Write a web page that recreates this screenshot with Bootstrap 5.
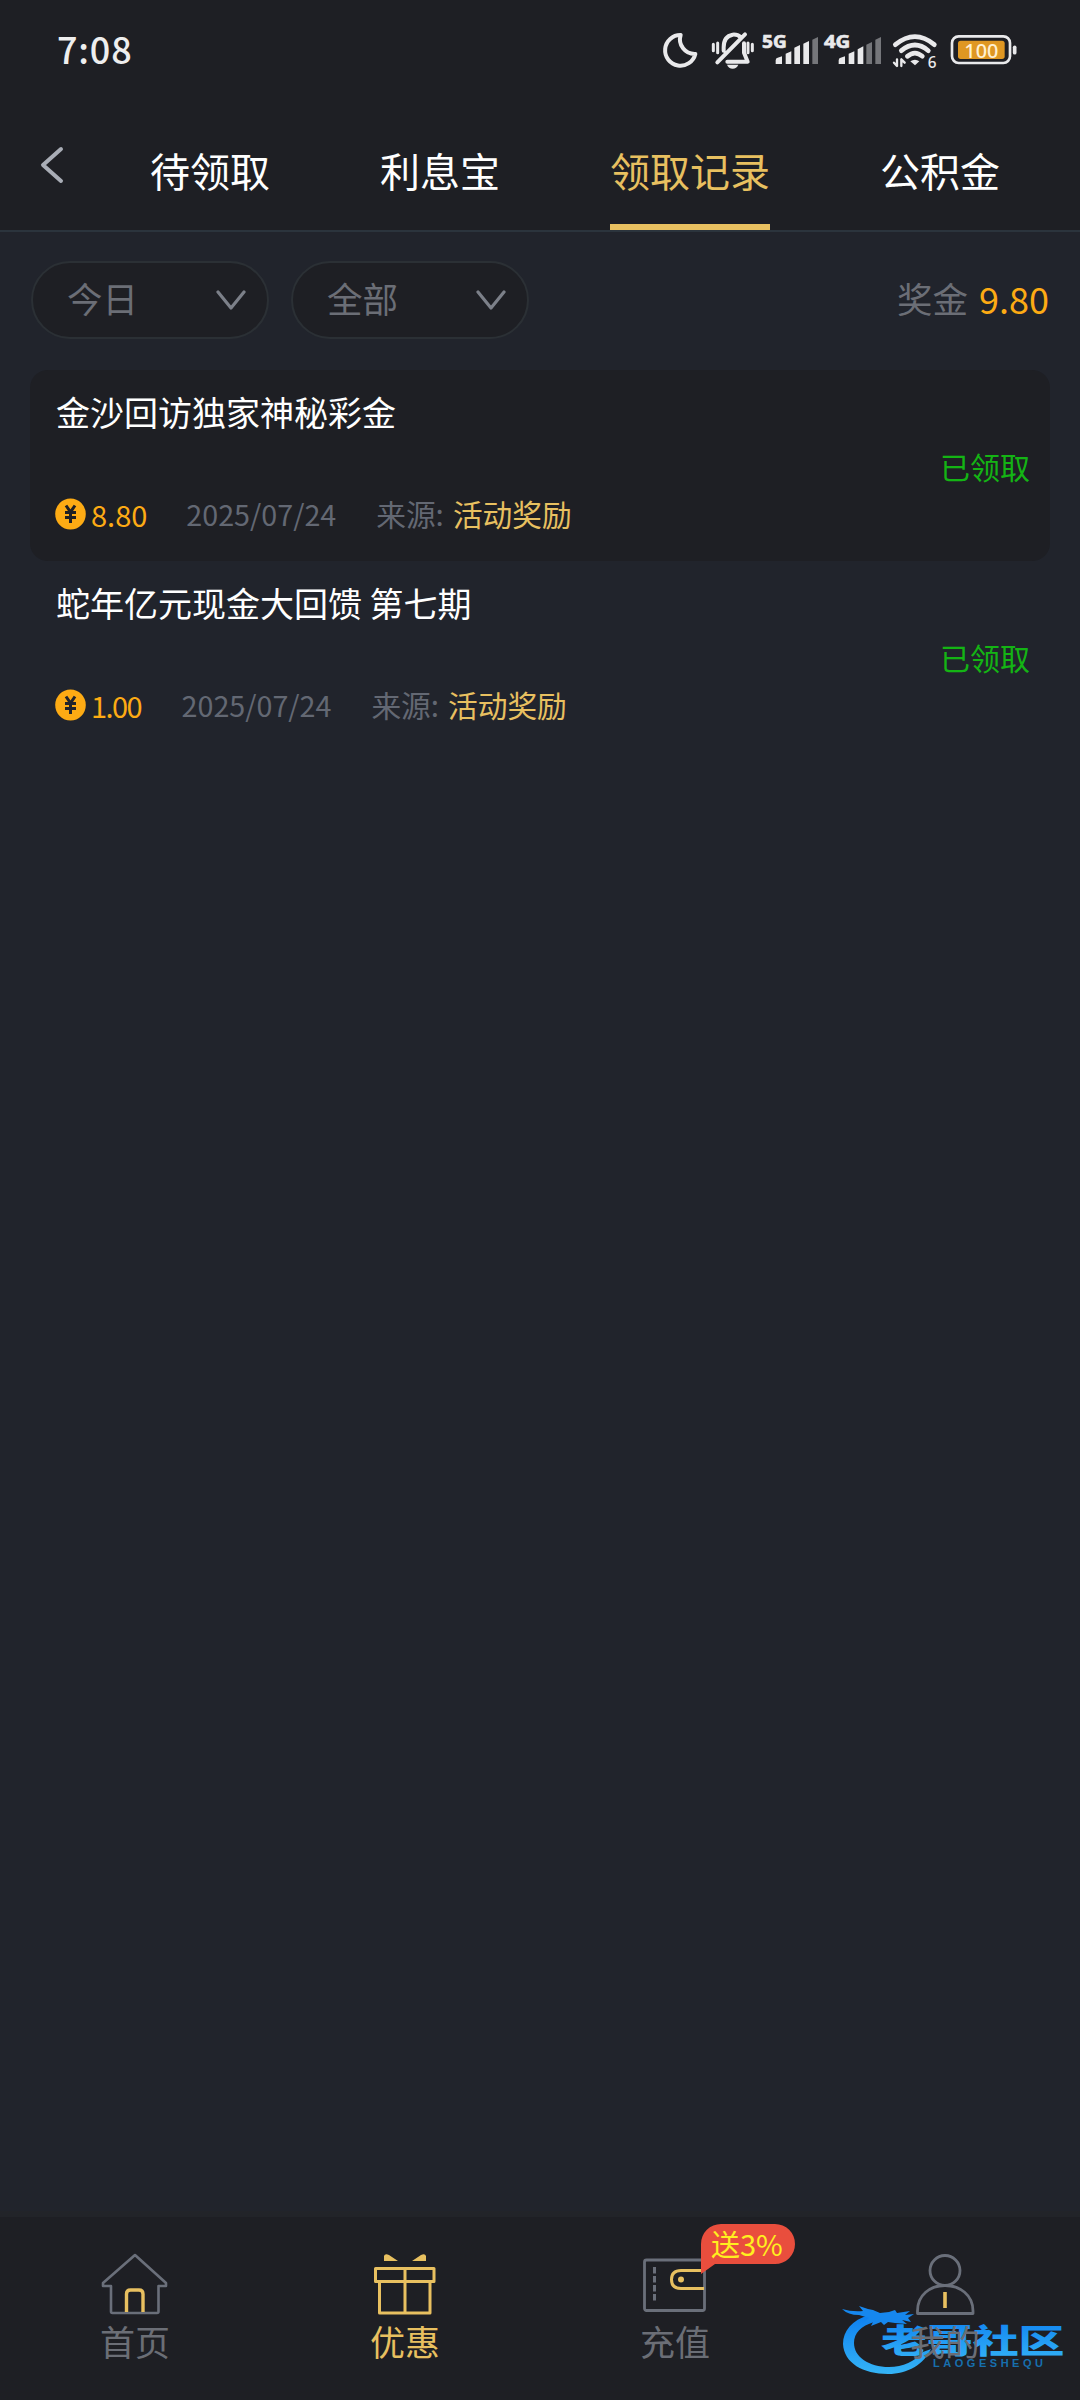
<!DOCTYPE html>
<html lang="zh-CN">
<head>
<meta charset="utf-8">
<meta name="viewport" content="width=device-width, initial-scale=1">
<title>领取记录</title>
<link href="https://cdn.jsdelivr.net/npm/bootstrap@5.3.0/dist/css/bootstrap.min.css" rel="stylesheet">
<style>
  :root { --ink: #1e1f24; --page: #21242c; --gold: #e8c060; --amber: #fdab14; --muted: #6b6e76; }
  body { background: var(--page); color: #fff; font-family: "Noto Sans CJK SC", sans-serif; min-height: 2400px; }
  .topbar { background: var(--ink); height: 232px; border-bottom: 2px solid #2b343d; }
  .statusbar { height: 100px; padding-left: 57px; }
  .clock { font-size: 36px; font-weight: 500; color: #eee; line-height: 97px; letter-spacing: .8px; }
  .status-icons { width: 440px; height: 100px; }
  .tabs { height: 130px; padding-left: 40px; }
  .back { width: 110px; height: 100%; color: #a9adb6; }
  .tab-list { gap: 110px; }
  .tab-item { font-size: 40px; line-height: 60px; padding: 40px 0 24px; border-bottom: 6px solid transparent; color: #fff; text-decoration: none; white-space: nowrap; }
  .tab-item.active { color: var(--gold); border-color: var(--gold); }
  .filters { padding: 29px 31px 0; gap: 22px; }
  .pill { width: 238px; height: 78px; background: var(--ink); border: 2px solid #2b3035; padding: 0 21px 0 34px; color: var(--muted); font-size: 35.5px; line-height: 1; }
  .pill span { padding-bottom: 4px; }
  .total { font-size: 35.5px; color: var(--muted); gap: 11px; line-height: 74px; height: 78px; }
  .total b { font-weight: 400; color: var(--amber); font-size: 36px; }
  .records { padding: 31px 30px 0; }
  .record { height: 191px; border-radius: 18px; padding: 17px 20px 0 26px; }
  .record.dark { background: var(--ink); }
  .record-title { font-size: 34px; line-height: 50px; }
  .record-state { font-size: 30px; line-height: 40px; color: #14b414; margin-top: 9px; }
  .record-meta { font-size: 29.7px; line-height: 38px; margin-top: 9px; color: #636873; }
  .record-meta svg { margin-left: -1px; }
  .amount { color: var(--amber); font-size: 29px; margin-left: 5px; }
  .stamp { font-size: 28.7px; margin-left: 39px; }
  .origin { margin-left: 40px; }
  .origin span { color: var(--gold); margin-left: 9px; }
  .narrow-one { letter-spacing: -1.6px; margin-right: 1.6px; }
  .bottombar { height: 183px; background: var(--ink); padding-top: 33px; }
  .edge { height: 6px; background: #222429; }
  .dock { width: 270px; color: var(--muted); font-size: 35px; line-height: 42px; }
  .dock.on { color: var(--gold); }
  .dock svg { width: 70px; height: 70px; }
  .promo { left: 161px; top: -26px; width: 94px; height: 50px; }
  .promo svg { width: 94px; height: 50px; }
  .promo svg, .dock svg { display: block; }
  .promo span { left: 10px; top: 0; font-size: 29px; line-height: 38px; color: #ffef1f; white-space: nowrap; }
  .brandmark { left: 835px; top: 2295px; width: 240px; height: 90px; }
  .over { z-index: 2; }
</style>
<script src="https://cdn.jsdelivr.net/npm/bootstrap@5.3.0/dist/js/bootstrap.bundle.min.js"></script>
</head>
<body class="d-flex flex-column position-relative">
<header class="topbar">
  <div class="statusbar d-flex justify-content-between">
    <span class="clock">7:08</span>
    <svg class="status-icons" viewBox="0 -30 1320 300" fill="none" stroke="#e9e9eb" stroke-linecap="round" stroke-linejoin="round">
      <path stroke-width="12" d="M122 75A46 46 0 1 0 166 132A44 44 0 0 1 122 75Z"/>
      <g stroke-width="12">
        <path d="M251 122V112C251 89 261 77 278 74C288 73 296 76 302 82M312 100V128L323 155H262M232 157L315 73"/>
        <path stroke-width="9" d="M220 103V122M233 99V128M324 99V128M337 103V122"/>
        <path stroke="none" fill="#e9e9eb" d="M261 164H295Q290 176 278 176Q266 176 261 164Z"/>
      </g>
      <g stroke="#e9e9eb" stroke-width="2" fill="#e9e9eb" font-family="Noto Sans" font-weight="700" font-size="54">
        <text x="366" y="113" textLength="74" lengthAdjust="spacingAndGlyphs">5G</text><text x="552" y="113" textLength="79" lengthAdjust="spacingAndGlyphs">4G</text>
      </g>
      <g stroke="none" fill="#e9e9eb">
        <path d="M407 162V151Q407 144 413 143L426 139V162ZM437 162V131L454 124V162ZM463 162V113L480 105V162ZM490 162V101L507 93V162Z"/>
        <path fill="#75767a" d="M517 162V89L534 81V162Z"/>
        <path d="M596 162V151Q596 144 602 143L615 139V162ZM626 162V131L643 124V162ZM653 162V118L670 109V162Z"/>
        <path fill="#75767a" d="M679 162V104L696 96V162ZM706 162V89L723 81V162Z"/>
      </g>
      <path stroke-width="14" d="M766 104Q825 56 883 104M784 122Q825 88 865 122M802 139Q825 120 847 139"/>
      <path stroke="none" fill="#e9e9eb" d="M811 154Q825 145 838 154L825 166Z"/>
      <path stroke-width="7" d="M762 158L771 168V148M794 158L784 148V168"/>
      <text x="863" y="173" font-size="46" font-family="Noto Sans" font-weight="500" fill="#e9e9eb" stroke="none">6</text>
      <rect x="936" y="79" width="174" height="80" rx="20" stroke-width="8"/>
      <rect x="954" y="92" width="140" height="55" rx="8" fill="#df9722" stroke="none"/>
      <path stroke-width="11" d="M1124 112V128"/>
      <text x="973" y="143" font-size="62" font-family="Noto Sans" font-weight="500" fill="#fff1d2" stroke="none" textLength="102" lengthAdjust="spacingAndGlyphs">100</text>
    </svg>
  </div>
  <nav class="tabs d-flex">
    <a class="back" href="#" aria-label="返回"><svg width="26" height="130" fill="none" stroke="currentColor" stroke-width="4" stroke-linecap="round" stroke-linejoin="round"><path d="M21 49L3 65L21 81"/></svg></a>
    <div class="tab-list d-flex">
      <a class="tab-item" href="#">待领取</a><a class="tab-item" href="#">利息宝</a><a class="tab-item active" href="#">领取记录</a><a class="tab-item" href="#">公积金</a>
    </div>
  </nav>
</header>
<main class="flex-grow-1">
  <div class="filters d-flex align-items-center">
    <div class="pill rounded-pill d-flex align-items-center justify-content-between"><span>今日</span><svg width="30" height="20" fill="none" stroke="#7c8089" stroke-width="3.2" stroke-linecap="round" stroke-linejoin="round"><path d="M2 2L15 18L28 2"/></svg></div>
    <div class="pill rounded-pill d-flex align-items-center justify-content-between"><span>全部</span><svg width="30" height="20" fill="none" stroke="#7c8089" stroke-width="3.2" stroke-linecap="round" stroke-linejoin="round"><path d="M2 2L15 18L28 2"/></svg></div>
    <div class="total d-flex ms-auto">奖金<b>9.80</b></div>
  </div>
  <section class="records">
    <article class="record dark">
      <div class="record-title">金沙回访独家神秘彩金</div>
      <div class="record-state text-end">已领取</div>
      <div class="record-meta d-flex align-items-center">
        <svg width="31" height="32" viewBox="0 0 31 32"><ellipse cx="15.5" cy="16" rx="15.3" ry="15.6" fill="#fdab14"/><path d="M11 7.5L15.5 14L20 7.5M10 14.5H21M10 19.5H21M15.5 14V25" fill="none" stroke="#1e1f24" stroke-width="3"/></svg>
        <span class="amount">8.80</span><span class="stamp">2025/07/24</span><span class="origin">来源:<span>活动奖励</span></span>
      </div>
    </article>
    <article class="record">
      <div class="record-title">蛇年亿元现金大回馈 第七期</div>
      <div class="record-state text-end">已领取</div>
      <div class="record-meta d-flex align-items-center">
        <svg width="31" height="32" viewBox="0 0 31 32"><ellipse cx="15.5" cy="16" rx="15.3" ry="15.6" fill="#fdab14"/><path d="M11 7.5L15.5 14L20 7.5M10 14.5H21M10 19.5H21M15.500 14V25" fill="none" stroke="#21242c" stroke-width="3"/></svg>
        <span class="amount narrow-one">1.00</span><span class="stamp">2025/07/24</span><span class="origin">来源:<span>活动奖励</span></span>
      </div>
    </article>
  </section>
</main>
<svg class="brandmark position-absolute" viewBox="0 0 240 90">
  <defs><linearGradient id="sea" x1="0" y1="0" x2="0" y2="1"><stop offset="0" stop-color="#0d7ff0"/><stop offset="1" stop-color="#35b4f6"/></linearGradient></defs>
  <path fill="url(#sea)" d="M34 20C17 25 8 36 8 49C9 68 28 79 53 79C73 79 89 69 96 54L88 57C80 66 68 72 54 72C34 72 19 62 19 48C19 38 26 31 39 27Z"/>
  <path fill="#1687ee" d="M7 14Q17 17 28 16L24 11L33 14L38 15L45 18L54 17L60 15L62 18L75 16L70 20L79 19L73 23L76 27L67 25L72 29L60 28L53 27L49 30L46 27L36 31L38 27L28 28L34 23L24 20Q13 20 7 14Z"/>
  <text transform="translate(46 58) scale(1.39 1)" font-family="Noto Sans CJK SC" font-weight="900" font-size="33" fill="url(#sea)">老哥社区</text>
  <text x="98" y="72" font-family="Liberation Sans" font-weight="700" font-size="11" fill="#176fae" textLength="110">LAOGESHEQU</text>
</svg>
<div class="edge"></div>
<footer class="bottombar">
  <nav class="d-flex position-relative over">
    <div class="dock d-flex flex-column align-items-center">
      <svg viewBox="0 0 70 70" fill="none" stroke="#6a6f7a" stroke-width="2.6" stroke-linejoin="round"><path d="M35 5L66 33V36H58.500V61.500Q58.500 63 57 63H12.500Q11 63 11 61.500V36H3V33Z"/><path stroke="#e8c060" stroke-width="3.400" d="M26.500 62V44Q26.500 40 30.500 40H39Q43 40 43 44V62"/></svg>首页
    </div>
    <div class="dock on d-flex flex-column align-items-center">
      <svg viewBox="0 0 70 70" fill="none" stroke="#e8c060" stroke-width="3" stroke-linejoin="round"><path d="M5.500 18.500H64V31.500H5.500ZM9.500 31.500H60V63H9.500ZM35 18.500V63"/><path stroke="none" fill="#e8c060" d="M14 11V6Q15 3 19 5L28 11ZM56 11V6Q55 3 51 5L42 11Z"/></svg>优惠
    </div>
    <div class="dock d-flex flex-column align-items-center position-relative">
      <svg viewBox="0 0 70 70" fill="none" stroke="#6a6f7a" stroke-width="2.800"><rect x="4.500" y="10" width="60" height="50.500" rx="2"/><path stroke-dasharray="6.500 2.500" stroke-width="3" d="M14.500 17V51"/><path stroke="#e8c060" stroke-width="3" d="M64 20.500H41Q31.500 20.500 31.500 29.500Q31.500 38.500 41 38.500H64"/><circle cx="41" cy="29.500" r="3" fill="#e8c060" stroke="none"/></svg>充值
      <div class="promo position-absolute"><svg viewBox="0 0 94 50"><path fill="#e94e3d" d="M20 0H74A20 20 0 0 1 74 40H14L0 50V20A20 20 0 0 1 20 0Z"/></svg><span class="position-absolute">送3%</span></div>
    </div>
    <div class="dock d-flex flex-column align-items-center">
      <svg viewBox="0 0 70 70" fill="none" stroke="#6a6f7a" stroke-width="2.800" stroke-linejoin="round"><circle cx="35" cy="20.500" r="15"/><path d="M7.500 63.500V61C7.500 45 20 35.500 35 35.500S63 45 63 61V63.500Z"/><path stroke="#e8c060" stroke-width="3.600" d="M35 42V58"/></svg>我的
    </div>
  </nav>
</footer>
</body>
</html>
